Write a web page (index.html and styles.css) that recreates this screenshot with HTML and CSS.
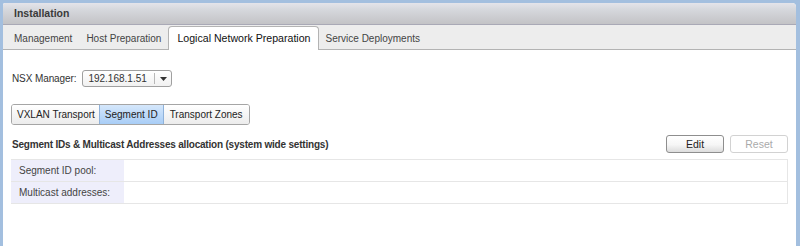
FILE: index.html
```html
<!DOCTYPE html>
<html lang="en">
<head>
  <meta charset="UTF-8">
  <title>Installation</title>
  <link rel="stylesheet" href="styles.css">
</head>
<body>
  <div class="panel">
    <div class="titlebar">Installation</div>

    <div class="tabs">
      <span class="tab">Management</span>
      <span class="tab">Host Preparation</span>
      <span class="tab active">Logical Network Preparation</span>
      <span class="tab">Service Deployments</span>
    </div>

    <div class="content">
      <div class="manager-row">
        <label>NSX Manager:</label>
        <div class="select">
          <span class="select-value">192.168.1.51</span>
          <span class="select-arrow">
            <svg width="7" height="4" viewBox="0 0 7 4"><path d="M0 0h7L3.5 4z" fill="#333"/></svg>
          </span>
        </div>
      </div>

      <div class="segmented">
        <span class="seg">VXLAN Transport</span>
        <span class="seg selected">Segment ID</span>
        <span class="seg">Transport Zones</span>
      </div>

      <div class="section-head">
        <h2>Segment IDs &amp; Multicast Addresses allocation (system wide settings)</h2>
        <div class="buttons">
          <button class="btn">Edit</button>
          <button class="btn disabled">Reset</button>
        </div>
      </div>

      <table class="props">
        <tr>
          <th>Segment ID pool:</th>
          <td></td>
        </tr>
        <tr>
          <th>Multicast addresses:</th>
          <td></td>
        </tr>
      </table>
    </div>
  </div>
</body>
</html>
```

FILE: styles.css
```css
body {
  margin: 0;
  padding: 3px 4px 0 3px;
  background-color: #a3bfdf;
  font-family: "Liberation Sans", Arial, sans-serif;
  font-size: 10px;
  color: #333;
  height: 246px;
  box-sizing: border-box;
  overflow: hidden;
}
.panel {
  background-color: #fff;
  height: 100%;
  border-top-right-radius: 4px;
  border-top-left-radius: 2px;
  overflow: hidden;
}
.titlebar {
  height: 21px;
  line-height: 20px;
  padding-left: 11px;
  font-weight: bold;
  font-size: 10.5px;
  color: #3a3a3a;
  background: linear-gradient(#e4e4ea 0%, #d6d8dd 30%, #c3c3c6 100%);
  border-bottom: 1px solid #a9a9b6;
}
.tabs {
  display: flex;
  align-items: flex-end;
  height: 24px;
  padding-left: 4px;
  background-color: #ededed;
  border-bottom: 1px solid #b3b3b3;
}
.tab {
  padding: 0 7px;
  line-height: 21px;
  color: #444;
}
.tab.active {
  background-color: #fff;
  color: #111;
  font-size: 10.6px;
  border: 1px solid #b3b3b3;
  border-bottom: none;
  border-radius: 4px 4px 0 0;
  margin-bottom: -1px;
  line-height: 23px;
  padding: 0 7px 0 8px;
}
.content {
  padding: 20px 8px 0 8px;
}
.manager-row {
  display: flex;
  align-items: center;
  gap: 6px;
  padding-left: 1px;
  margin-bottom: 17px;
}
.manager-row label {
  letter-spacing: -0.1px;
}
.select {
  display: flex;
  align-items: center;
  height: 15px;
  width: 88px;
  border: 1px solid #a0a0a0;
  border-radius: 3px;
  background: linear-gradient(#fff, #f1f1f1);
}
.select-value {
  flex: 1;
  padding-left: 5px;
}
.select-arrow {
  display: flex;
  align-items: center;
  justify-content: center;
  width: 16px;
  height: 11px;
  border-left: 1px solid #b8b8b8;
}
.segmented {
  display: inline-flex;
  border: 1px solid #a5a5a5;
  border-radius: 3px;
  overflow: hidden;
}
.seg {
  padding: 0 5px;
  line-height: 19px;
  background: linear-gradient(#ffffff, #ececec);
  color: #222;
}
.seg:first-child {
  padding: 0 4px 0 5px;
}
.seg:last-child {
  padding: 0 6px;
}
.seg + .seg {
  border-left: 1px solid #b5b5b5;
}
.seg.selected {
  background: linear-gradient(#d5e7fb, #a8cdf6);
  border-left-color: #8fb2da;
  border-right: 1px solid #8fb2da;
}
.seg.selected + .seg {
  border-left: none;
}
.section-head {
  display: flex;
  align-items: center;
  justify-content: space-between;
  margin-top: 10px;
  margin-bottom: 6px;
}
.section-head h2 {
  margin: 0;
  font-size: 10px;
  font-weight: bold;
  color: #333;
  letter-spacing: -0.2px;
  padding-left: 1px;
}
.buttons {
  display: flex;
  gap: 6px;
}
.btn {
  width: 58px;
  height: 18px;
  padding: 0;
  font-family: inherit;
  font-size: 10.5px;
  color: #222;
  border: 1px solid #8e8e8e;
  border-radius: 3px;
  background: linear-gradient(#ffffff 0%, #f6f6f6 55%, #dcdcdc 100%);
}
.btn.disabled {
  color: #aaa;
  border-color: #d2d2d2;
  background: #fff;
}
.props {
  width: 100%;
  border-collapse: collapse;
  margin-top: 1px;
}
.props th, .props td {
  height: 21px;
  border-top: 1px solid #e6e6e6;
  border-bottom: 1px solid #e6e6e6;
  padding: 0;
}
.props th {
  width: 105px;
  text-align: left;
  font-weight: normal;
  color: #444;
  padding-left: 8px;
  background-color: #eeeefb;
}
.props td {
  border-right: 1px solid #e6e6e6;
}
```
